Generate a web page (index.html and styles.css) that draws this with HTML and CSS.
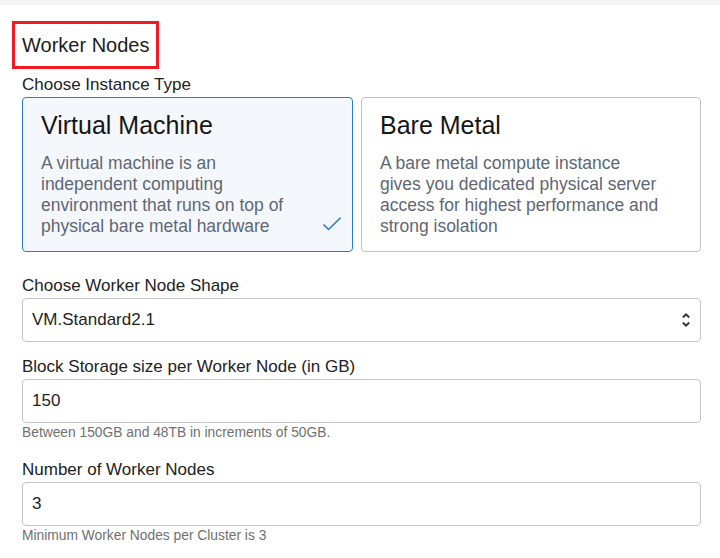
FILE: index.html
```html
<!DOCTYPE html>
<html lang="en">
<head>
<meta charset="utf-8">
<title>Worker Nodes</title>
<link rel="stylesheet" href="styles.css">
</head>
<body>
<div class="topbar"></div>
<main class="content">
  <h2 class="section-title">Worker Nodes</h2>
  <div class="label label-first">Choose Instance Type</div>
  <div class="cards">
    <div class="card card-selected">
      <div class="card-title">Virtual Machine</div>
      <div class="card-desc">A virtual machine is an<br>independent computing<br>environment that runs on top of<br>physical bare metal hardware</div>
      <svg class="check" width="20" height="14" viewBox="0 0 20 14" aria-hidden="true"><path d="M1.5 7.5 L6.5 12.5 L18.5 0.8" fill="none" stroke="#2a7bd0" stroke-width="1.6"/></svg>
    </div>
    <div class="card">
      <div class="card-title">Bare Metal</div>
      <div class="card-desc">A bare metal compute instance<br>gives you dedicated physical server<br>access for highest performance and<br>strong isolation</div>
    </div>
  </div>

  <div class="field">
    <div class="label">Choose Worker Node Shape</div>
    <div class="control select">
      <span>VM.Standard2.1</span>
      <svg class="chev" width="10" height="18" viewBox="0 0 10 18" aria-hidden="true"><path d="M1.8 6.5 L5 3.3 L8.2 6.5 M1.8 11.5 L5 14.7 L8.2 11.5" fill="none" stroke="#333" stroke-width="1.9"/></svg>
    </div>
  </div>

  <div class="field">
    <div class="label">Block Storage size per Worker Node (in GB)</div>
    <div class="control"><span>150</span></div>
    <div class="help">Between 150GB and 48TB in increments of 50GB.</div>
  </div>

  <div class="field field-after-help">
    <div class="label">Number of Worker Nodes</div>
    <div class="control"><span>3</span></div>
    <div class="help">Minimum Worker Nodes per Cluster is 3</div>
  </div>
</main>
</body>
</html>
```

FILE: styles.css
```css
* { box-sizing: border-box; }
html, body { margin: 0; padding: 0; background: #ffffff; }
body {
  font-family: "Liberation Sans", Arial, sans-serif;
  color: #222222;
  width: 720px;
  height: 558px;
  overflow: hidden;
}
.topbar { height: 5px; background: #f5f5f5; }
.content {
  padding: 0 19px 0 22px;
  display: flex;
  flex-direction: column;
  align-items: stretch;
}
.section-title {
  align-self: flex-start;
  margin: 16px 0 0 -10px;
  padding: 9px 7px 9px 7px;
  border: 3px solid #ee1b22;
  font-size: 20px;
  line-height: 24px;
  font-weight: normal;
  color: #1d1d1d;
}
.label {
  font-size: 17px;
  line-height: 20px;
  padding-top: 1px;
  color: #222222;
}
.label-first { margin-top: 5px; }
.cards {
  margin-top: 2px;
  display: grid;
  grid-template-columns: 331px 1fr;
  gap: 8px;
}
.card {
  position: relative;
  height: 155px;
  border: 1px solid #c3c3c8;
  border-radius: 4px;
  padding: 12px 18px 14px 18px;
  background: #ffffff;
}
.card-selected {
  border-color: #2a7bd0;
  background: #f4f8fd;
}
.card-title {
  font-size: 25px;
  line-height: 30px;
  color: #161616;
}
.card-desc {
  margin-top: 13px;
  font-size: 17.5px;
  line-height: 21px;
  color: #5f6773;
  white-space: nowrap;
}
.check {
  position: absolute;
  right: 10px;
  bottom: 20px;
}
.field { margin-top: 23px; display: flex; flex-direction: column; }
.field + .field { margin-top: 14px; }
.field-after-help { margin-top: 18px !important; }
.control {
  margin-top: 2px;
  height: 44px;
  border: 1px solid #c6c6ca;
  border-radius: 4px;
  background: #ffffff;
  display: flex;
  align-items: center;
  padding: 0 9px;
  font-size: 17px;
  color: #1e1e1e;
}
.select { justify-content: space-between; padding-right: 9px; }
.help {
  margin-top: 2px;
  font-size: 13.8px;
  line-height: 16px;
  color: #707070;
}
```
